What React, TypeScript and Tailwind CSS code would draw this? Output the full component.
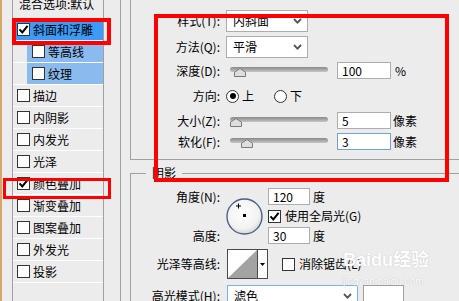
import type { ReactNode } from "react";

interface LayerRow {
  label: string;
  checked?: boolean;
  selected?: boolean;
  sub?: boolean;
}

const layerRows: LayerRow[] = [
  { label: "斜面和浮雕", checked: true, selected: true },
  { label: "等高线", sub: true },
  { label: "纹理", sub: true },
  { label: "描边" },
  { label: "内阴影" },
  { label: "内发光" },
  { label: "光泽" },
  { label: "颜色叠加", checked: true },
  { label: "渐变叠加" },
  { label: "图案叠加" },
  { label: "外发光" },
  { label: "投影" },
];

const Check = ({ checked = false }: { checked?: boolean }) => (
  <span className="flex h-[13px] w-[13px] shrink-0 items-center justify-center border border-[#333333] bg-white">
    {checked && (
      <svg width="11" height="11" viewBox="0 0 11 11">
        <path d="M1.5 5.3 L4.3 8.4 L9.6 1.8" fill="none" stroke="#000" strokeWidth="2" />
      </svg>
    )}
  </span>
);

const Radio = ({ on = false }: { on?: boolean }) => (
  <span className="flex h-[13px] w-[13px] shrink-0 items-center justify-center rounded-full border border-[#333333] bg-white">
    {on && <span className="h-[6px] w-[6px] rounded-full bg-black" />}
  </span>
);

const Chevron = () => (
  <svg width="9" height="6" viewBox="0 0 9 6">
    <path d="M1 1 L4.5 4.6 L8 1" fill="none" stroke="#555" strokeWidth="1.8" />
  </svg>
);

const Select = ({ value, className }: { value: string; className: string }) => (
  <div className={`flex h-[22px] shrink-0 items-center justify-between bg-white pl-[6px] pr-[5px] ${className}`}>
    <span>{value}</span>
    <Chevron />
  </div>
);

const Field = ({ value, className }: { value: string; className: string }) => (
  <div className={`flex h-[17px] shrink-0 items-center bg-white pl-[4px] ${className}`}>{value}</div>
);

const Slider = ({ thumb }: { thumb: string }) => (
  <div className="relative h-[17px] w-[102px] shrink-0">
    <div className="absolute left-[4px] top-[5px] h-[5px] w-[98px] rounded-full bg-linear-to-b from-[#8a8a8a] to-[#c6c6c6]" />
    <svg className={`absolute top-[6px] ${thumb}`} width="12" height="9" viewBox="0 0 12 9">
      <path d="M6 0.5 L11.5 4.2 V8.5 H0.5 V4.2 Z" fill="#dedede" stroke="#7a7a7a" />
    </svg>
  </div>
);

const Label = ({ children }: { children: ReactNode }) => (
  <div className="w-[90px] shrink-0 pr-[1px] text-right">{children}</div>
);

export default function App() {
  return (
    <div className="relative flex h-[301px] w-[459px] overflow-hidden bg-[#ececec] font-['Noto_Sans_CJK_SC','Liberation_Sans',sans-serif] text-[12px] leading-[14px] text-black">
      {/* left edge */}
      <div className="w-[2px] shrink-0 bg-[#d5a868]" />
      <div className="w-[10px] shrink-0" />

      {/* style list */}
      <div className="flex w-[92px] shrink-0 flex-col border-x border-[#a0a0a0]">
        <div className="h-[19px] pl-[6px]">
          <div className="-mt-[3px]">混合选项:默认</div>
        </div>
        {layerRows.map((row) => (
          <div key={row.label} className="flex h-[22px] shrink-0 border-b border-white">
            {row.sub ? (
              <div className="ml-[14px] flex flex-1 items-center bg-[#8bbaee] pl-[5px]">
                <Check checked={row.checked} />
                <span className="ml-[3px]">{row.label}</span>
              </div>
            ) : (
              <div className={`flex flex-1 items-center pl-[4px] ${row.selected ? "bg-[#3b9bf7]" : ""}`}>
                <Check checked={row.checked} />
                <span className="ml-[3px]">{row.label}</span>
              </div>
            )}
          </div>
        ))}
      </div>

      <div className="w-[16px] shrink-0" />

      {/* right panel */}
      <div className="flex w-[400px] shrink-0 flex-col border-l border-[#a0a0a0] pl-[9px]">
        {/* structure group */}
        <div className="flex h-[160px] shrink-0 flex-col border-b border-l border-[#a0a0a0] pt-[10px]">
          <div className="flex h-[22px] items-center">
            <Label>样式(T):</Label>
            <Select value="内斜面" className="ml-[5px] w-[82px] border border-[#adadad]" />
          </div>
          <div className="mt-[4px] flex h-[22px] items-center">
            <Label>方法(Q):</Label>
            <Select value="平滑" className="ml-[5px] w-[82px] border border-[#adadad]" />
          </div>
          <div className="mt-[4px] flex h-[17px] items-center">
            <Label>深度(D):</Label>
            <div className="ml-[5px]">
              <Slider thumb="left-[8px]" />
            </div>
            <Field value="100" className="ml-[9px] w-[54px] border border-[#adadad]" />
            <span className="ml-[4px]">%</span>
          </div>
          <div className="mt-[8px] flex h-[18px] items-center">
            <Label>方向:</Label>
            <div className="ml-[5px] flex items-center">
              <Radio on />
              <span className="ml-[3px]">上</span>
              <span className="ml-[20px]">
                <Radio />
              </span>
              <span className="ml-[3px]">下</span>
            </div>
          </div>
          <div className="mt-[7px] flex h-[17px] items-center">
            <Label>大小(Z):</Label>
            <div className="ml-[5px]">
              <Slider thumb="left-[4px]" />
            </div>
            <Field value="5" className="ml-[9px] w-[54px] border border-[#adadad]" />
            <span className="ml-[2px]">像素</span>
          </div>
          <div className="mt-[4px] flex h-[17px] items-center">
            <Label>软化(F):</Label>
            <div className="ml-[5px]">
              <Slider thumb="left-[15px]" />
            </div>
            <Field value="3" className="ml-[9px] w-[54px] border border-[#6ea3dc]" />
            <span className="ml-[2px]">像素</span>
          </div>
        </div>

        {/* shading group */}
        <fieldset className="mt-[6px] flex flex-col border-l border-t border-[#a0a0a0]">
          <legend className="ml-[15px] px-[6px] leading-[14px]">阴影</legend>
          <div className="mt-[8px] flex h-[56px] items-center">
            <div className="flex h-full w-[90px] shrink-0 flex-col justify-between pr-[1px] text-right">
              <div className="flex h-[17px] items-center justify-end">角度(N):</div>
              <div className="flex h-[17px] items-center justify-end">高度:</div>
            </div>
            <svg className="ml-[5px] shrink-0" width="37" height="37" viewBox="0 0 37 37">
              <defs>
                <radialGradient id="dial" cx="45%" cy="40%" r="60%">
                  <stop offset="0%" stopColor="#ffffff" />
                  <stop offset="75%" stopColor="#f2f2f2" />
                  <stop offset="100%" stopColor="#d6d6d6" />
                </radialGradient>
              </defs>
              <circle cx="18.5" cy="18.5" r="17.5" fill="url(#dial)" stroke="#4f5f82" strokeWidth="1.4" />
              <path d="M12.5 5.5 V10.5 M10 8 H15" stroke="#000" strokeWidth="1" />
              <rect x="17" y="16" width="3" height="3" fill="#000" />
            </svg>
            <div className="ml-[5px] flex h-full flex-col">
              <div className="flex h-[17px] items-center">
                <Field value="120" className="w-[42px] border border-[#adadad]" />
                <span className="ml-[3px]">度</span>
              </div>
              <div className="mt-[5px] flex h-[12px] items-center">
                <Check checked />
                <span className="ml-[4px]">使用全局光(G)</span>
              </div>
              <div className="mt-[5px] flex h-[17px] items-center">
                <Field value="30" className="w-[42px] border border-[#adadad]" />
                <span className="ml-[3px]">度</span>
              </div>
            </div>
          </div>

          <div className="mt-[5px] flex h-[30px] items-center">
            <Label>光泽等高线:</Label>
            <div className="ml-[6px] flex h-[30px] w-[41px] shrink-0 border border-[#4a4a4a] bg-white">
              <svg width="29" height="28" viewBox="0 0 29 28" className="shrink-0">
                <rect width="29" height="28" fill="#ffffff" />
                <polygon points="0,28 29,0 29,28" fill="#a3a3a3" />
              </svg>
              <div className="flex flex-1 items-center justify-center border-l border-[#4a4a4a] bg-white">
                <svg width="5" height="3" viewBox="0 0 5 3">
                  <polygon points="0,0 5,0 2.5,3" fill="#000" />
                </svg>
              </div>
            </div>
            <span className="ml-[14px]">
              <Check />
            </span>
            <span className="ml-[4px]">消除锯齿(L)</span>
          </div>

          <div className="mt-[6px] flex h-[22px] items-center">
            <Label>高光模式(H):</Label>
            <Select value="滤色" className="ml-[6px] w-[131px] border border-[#7db2e8]" />
            <div className="ml-[5px] h-[22px] w-[41px] shrink-0 border border-[#a0a0a0] bg-white" />
          </div>
        </fieldset>
      </div>

      {/* highlight boxes */}
      <div className="pointer-events-none absolute left-[12px] top-[18px] h-[27px] w-[99px] border-[4px] border-[#ff0000]" />
      <div className="pointer-events-none absolute left-[3px] top-[178px] h-[21px] w-[108px] border-[3px] border-[#ff0000]" />
      <div className="pointer-events-none absolute left-[154px] top-[14px] h-[168px] w-[295px] border-[4px] border-[#ff0000]" />

      {/* watermark */}
      <div className="pointer-events-none absolute left-[343px] top-[249px] flex flex-col text-white [text-shadow:0_0_1px_rgba(0,0,0,0.25)]">
        <span className="font-['Liberation_Sans','Noto_Sans_CJK_SC',sans-serif] text-[18px] font-bold leading-[22px]">
          Baidu经验
        </span>
        <span className="mt-[6px] font-['Liberation_Sans',sans-serif] text-[10px] leading-[10px]">jingyan.baidu.com</span>
      </div>
    </div>
  );
}
